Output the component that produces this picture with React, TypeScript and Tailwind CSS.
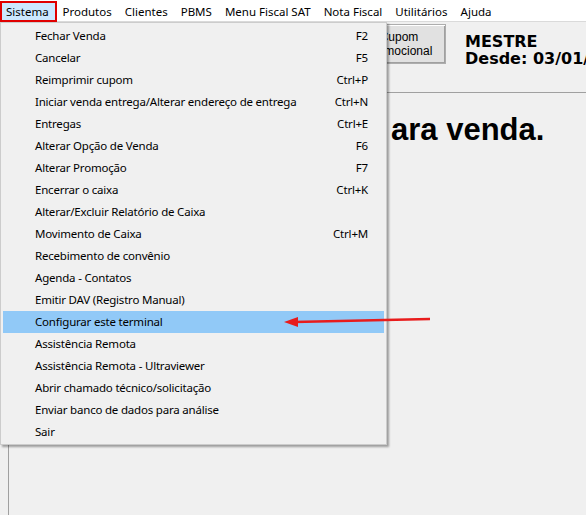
import { useState } from "react";

const menuBar = [
  "Sistema",
  "Produtos",
  "Clientes",
  "PBMS",
  "Menu Fiscal SAT",
  "Nota Fiscal",
  "Utilitários",
  "Ajuda",
];

const items: { label: string; shortcut?: string }[] = [
  { label: "Fechar Venda", shortcut: "F2" },
  { label: "Cancelar", shortcut: "F5" },
  { label: "Reimprimir cupom", shortcut: "Ctrl+P" },
  { label: "Iniciar venda entrega/Alterar endereço de entrega", shortcut: "Ctrl+N" },
  { label: "Entregas", shortcut: "Ctrl+E" },
  { label: "Alterar Opção de Venda", shortcut: "F6" },
  { label: "Alterar Promoção", shortcut: "F7" },
  { label: "Encerrar o caixa", shortcut: "Ctrl+K" },
  { label: "Alterar/Excluir Relatório de Caixa" },
  { label: "Movimento de Caixa", shortcut: "Ctrl+M" },
  { label: "Recebimento de convênio" },
  { label: "Agenda - Contatos" },
  { label: "Emitir DAV (Registro Manual)" },
  { label: "Configurar este terminal" },
  { label: "Assistência Remota" },
  { label: "Assistência Remota - Ultraviewer" },
  { label: "Abrir chamado técnico/solicitação" },
  { label: "Enviar banco de dados para análise" },
  { label: "Sair" },
];

export default function App() {
  const [hovered] = useState("Configurar este terminal");

  return (
    <div
      className="relative w-[586px] h-[515px] overflow-hidden bg-[#f0f0f0] text-[11.5px] tracking-[-0.2px] text-black"
      style={{ fontFamily: '"Noto Sans", "Open Sans", sans-serif' }}
    >
      {/* Menu bar */}
      <div className="flex h-[22px] bg-white border-b border-[#dadada] pl-[1px] pt-[2px] tracking-normal">
        {menuBar.map((m, i) => (
          <div
            key={m}
            className={
              i === 0
                ? "h-[19px] w-[55px] shrink-0 pl-[5px] flex items-center bg-[#cce8ff] outline-2 outline-[#e00000] -outline-offset-1 leading-none"
                : "h-[19px] shrink-0 px-[6.5px] flex items-center leading-none"
            }
          >
            {m}
          </div>
        ))}
      </div>

      {/* Top area */}
      <div className="flex h-[70px] pl-[352px] pt-[2px] overflow-hidden">
        <div
          className="w-[94px] h-[40px] shrink-0 border border-[#adadad] bg-[#e1e1e1] shadow-[inset_1px_1px_0_#fff,inset_-1px_-1px_0_#a0a0a0] flex flex-col items-center justify-center text-[12px] leading-[14px] tracking-normal"
          style={{ fontFamily: '"Liberation Sans", Arial, sans-serif' }}
        >
          <span>Cupom</span>
          <span>Promocional</span>
        </div>
        <div
          className="ml-[19px] shrink-0 pt-[9px] font-bold text-[16px] leading-[17px] tracking-normal whitespace-nowrap"
          style={{ fontFamily: '"DejaVu Sans", Verdana, sans-serif' }}
        >
          <div>MESTRE</div>
          <div>Desde: 03/01/2020</div>
        </div>
      </div>

      {/* Main panel */}
      <div className="ml-[8px] h-[440px] border-t border-l border-[#a0a0a0]">
        <div
          className="pt-[14px] pl-[382px] font-bold text-[31px] tracking-normal whitespace-nowrap"
          style={{ fontFamily: '"Liberation Sans", Arial, sans-serif' }}
        >
          ara venda.
        </div>
      </div>

      {/* Dropdown menu */}
      <div className="absolute left-0 top-[22px] w-[387px] h-[423px] bg-[#f0f0f0] border border-[#cccccc] shadow-[2px_2px_2px_rgba(0,0,0,0.35)] pt-[2px]">
        {items.map((it) => (
          <div
            key={it.label}
            className={
              it.label === hovered
                ? "mx-[2px] h-[22px] flex items-center justify-between bg-[#91c9f7] pl-[32px] pr-[16px]"
                : "mx-[2px] h-[22px] flex items-center justify-between pl-[32px] pr-[16px]"
            }
          >
            <span>{it.label}</span>
            {it.shortcut && <span>{it.shortcut}</span>}
          </div>
        ))}
      </div>

      {/* Red arrow */}
      <svg
        className="absolute left-[280px] top-[312px]"
        width="156"
        height="20"
        viewBox="0 0 156 20"
      >
        <line x1="150" y1="7" x2="14" y2="10" stroke="#e81c1c" strokeWidth="2.5" />
        <polygon points="4,10 18,5 18,15" fill="#e81c1c" />
      </svg>
    </div>
  );
}
